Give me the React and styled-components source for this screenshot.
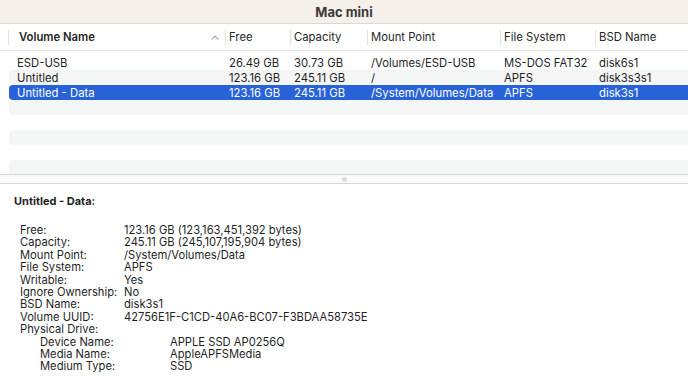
import React from 'react';
import styled, { createGlobalStyle } from 'styled-components';

const GlobalStyle = createGlobalStyle`
  html, body {
    margin: 0;
    padding: 0;
    background: #ffffff;
  }
  body {
    font-family: Inter, "Liberation Sans", sans-serif;
    -webkit-font-smoothing: antialiased;
  }
`;

const COLUMNS = '217px 65px 77px 133px 95px 92px';

const Window = styled.div`
  width: 688px;
  height: 379px;
  display: flex;
  flex-direction: column;
  overflow: hidden;
  color: #1f1f1f;
  font-size: 11px;
`;

const TitleBar = styled.div`
  height: 23px;
  flex: none;
  display: flex;
  align-items: center;
  justify-content: center;
  background: #f6f0ea;
  border-bottom: 1px solid #dcd7d2;
  font-size: 13px;
  font-weight: 700;
  color: #3a3a3a;
`;

const TablePane = styled.div`
  height: 150px;
  flex: none;
  overflow: hidden;
  background: #ffffff;
`;

const HeaderRow = styled.div`
  display: grid;
  grid-template-columns: ${COLUMNS};
  height: 26px;
  padding-left: 9px;
  border-bottom: 1px solid #e4e4e4;
  align-items: center;
`;

const HeaderCell = styled.div`
  position: relative;
  display: flex;
  align-items: center;
  justify-content: space-between;
  height: 100%;
  padding-left: ${p => p.$first ? '10px' : '3px'};
  padding-right: 7px;
  font-size: 11.3px;
  font-weight: ${p => p.$bold ? 600 : 400};
  color: #262626;
  white-space: nowrap;

  &::before {
    content: '';
    position: absolute;
    left: -1px;
    top: 6px;
    bottom: 5px;
    width: 1px;
    background: #e2e2e2;
  }
`;

const SortArrow = styled.svg`
  width: 8px;
  height: 5px;
  flex: none;
`;

const Body = styled.div`
  padding-top: 4px;
`;

const Row = styled.div`
  display: grid;
  grid-template-columns: ${COLUMNS};
  height: 15px;
  align-items: center;
  margin-left: 9px;
  border-radius: 4px 0 0 4px;
  font-size: 11.3px;
  background: ${p => p.$selected ? '#2862d9' : p.$odd ? '#f4f5f5' : 'transparent'};
  color: ${p => p.$selected ? '#ffffff' : '#1f1f1f'};
`;

const Cell = styled.div`
  padding-left: ${p => p.$first ? '8px' : '3px'};
  white-space: nowrap;
  overflow: hidden;
`;

const Splitter = styled.div`
  height: 8px;
  flex: none;
  display: flex;
  align-items: center;
  justify-content: center;
  border-top: 1px solid #d6d6d6;
  border-bottom: 1px solid #d6d6d6;
  background: #fbfbfb;
`;

const Dot = styled.span`
  width: 5px;
  height: 5px;
  border-radius: 50%;
  background: #dcdcdc;
`;

const Detail = styled.div`
  flex: 1;
  padding: 11px 14px 0 14px;
  background: #ffffff;
`;

const DetailTitle = styled.div`
  font-weight: 700;
  font-size: 11px;
  height: 12px;
  line-height: 12px;
  margin-bottom: 17px;
`;

const InfoList = styled.div`
  display: flex;
  flex-direction: column;
  font-size: 11.2px;
`;

const InfoRow = styled.div`
  display: flex;
  height: 12.4px;
  line-height: 12.4px;
  padding-left: ${p => p.$nested ? '26px' : '6px'};
  white-space: nowrap;
`;

const InfoLabel = styled.span`
  width: ${p => p.$nested ? '130px' : '104px'};
  flex: none;
`;

const InfoValue = styled.span``;

const headers = ['Volume Name', 'Free', 'Capacity', 'Mount Point', 'File System', 'BSD Name'];

const volumes = [
  ['ESD-USB', '26.49 GB', '30.73 GB', '/Volumes/ESD-USB', 'MS-DOS FAT32', 'disk6s1'],
  ['Untitled', '123.16 GB', '245.11 GB', '/', 'APFS', 'disk3s3s1'],
  ['Untitled - Data', '123.16 GB', '245.11 GB', '/System/Volumes/Data', 'APFS', 'disk3s1'],
];

const info = [
  ['Free:', '123.16 GB (123,163,451,392 bytes)'],
  ['Capacity:', '245.11 GB (245,107,195,904 bytes)'],
  ['Mount Point:', '/System/Volumes/Data'],
  ['File System:', 'APFS'],
  ['Writable:', 'Yes'],
  ['Ignore Ownership:', 'No'],
  ['BSD Name:', 'disk3s1'],
  ['Volume UUID:', '42756E1F-C1CD-40A6-BC07-F3BDAA58735E'],
  ['Physical Drive:', ''],
  ['Device Name:', 'APPLE SSD AP0256Q', true],
  ['Media Name:', 'AppleAPFSMedia', true],
  ['Medium Type:', 'SSD', true],
];

export default function App() {
  const emptyRows = 5;
  return (
    <>
      <GlobalStyle />
      <Window>
        <TitleBar>Mac mini</TitleBar>
        <TablePane>
          <HeaderRow>
            {headers.map((h, i) => (
              <HeaderCell key={h} $first={i === 0} $bold={i === 0}>
                <span>{h}</span>
                {i === 0 && (
                  <SortArrow viewBox="0 0 8 5">
                    <path d="M0.8 4.4 L4 1.2 L7.2 4.4" fill="none" stroke="#9a9a9a" strokeWidth="1.1" />
                  </SortArrow>
                )}
              </HeaderCell>
            ))}
          </HeaderRow>
          <Body>
            {volumes.map((v, i) => (
              <Row key={v[0]} $odd={i % 2 === 1} $selected={i === 2}>
                {v.map((c, j) => (
                  <Cell key={j} $first={j === 0}>{c}</Cell>
                ))}
              </Row>
            ))}
            {Array.from({ length: emptyRows }).map((_, i) => (
              <Row key={'e' + i} $odd={(i + 3) % 2 === 1} />
            ))}
          </Body>
        </TablePane>
        <Splitter><Dot /></Splitter>
        <Detail>
          <DetailTitle>Untitled - Data:</DetailTitle>
          <InfoList>
            {info.map(([label, value, nested]) => (
              <InfoRow key={label} $nested={nested}>
                <InfoLabel $nested={nested}>{label}</InfoLabel>
                <InfoValue>{value}</InfoValue>
              </InfoRow>
            ))}
          </InfoList>
        </Detail>
      </Window>
    </>
  );
}
